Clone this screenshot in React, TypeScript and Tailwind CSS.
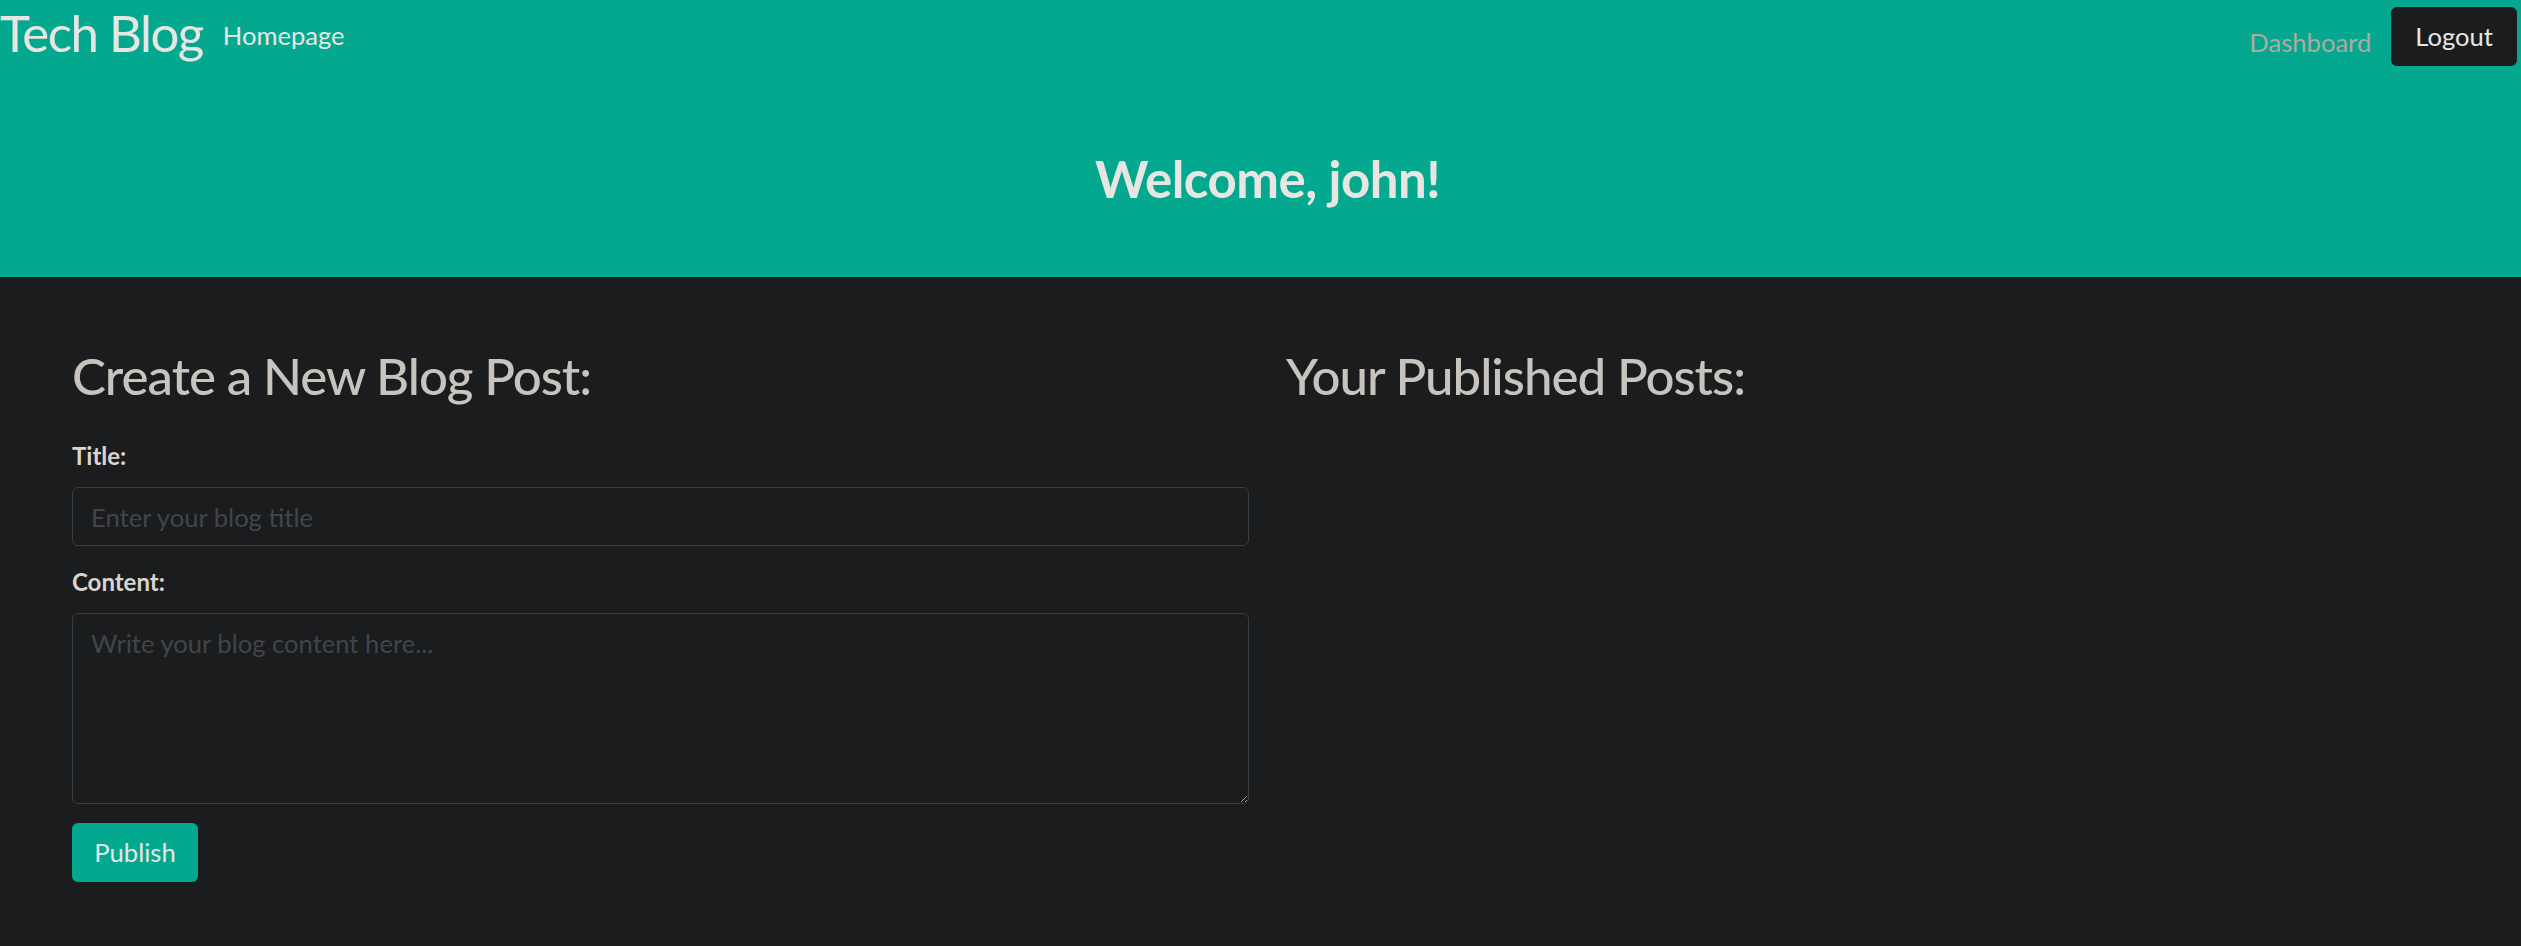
import React from "react";

function Navbar() {
    return (
        <nav className="flex items-start justify-between">
            <div className="flex items-center gap-[20px]">
                <a href="#" className="text-[51px] leading-[1.2] tracking-[-0.03em] text-[#e8e6e3] pt-[2px]">
                    Tech Blog
                </a>
                <a href="#" className="text-[25.6px] text-[#e8e6e3] pt-[8px]">
                    Homepage
                </a>
            </div>
            <div className="flex items-center gap-[20px] pt-[7px] pr-[4px]">
                <a href="#" className="text-[25.6px] text-[#b0aaa1] pt-[12px]">
                    Dashboard
                </a>
                <button className="h-[59px] px-[24px] rounded-[6px] bg-[#1b1c1e] text-[25.6px] text-[#e8e6e3]">
                    Logout
                </button>
            </div>
        </nav>
    );
}

function App() {
    return (
        <div className="min-h-[946px] bg-[#1b1c1e] font-['Lato',sans-serif]">
            <header className="h-[277px] bg-[#03a88f] flex flex-col">
                <Navbar />
                <h2 className="text-center text-[51px] font-bold tracking-[-0.01em] text-[#e8e6e3] mt-[75px] pl-[14px]">
                    Welcome, john!
                </h2>
            </header>

            <main className="grid grid-cols-2 gap-[37px] pl-[72px] pr-[58px] pt-[68px]">
                <section>
                    <h2 className="text-[51px] font-medium leading-[1.2] tracking-[-0.02em] text-[#c8c3bc] mb-[32px]">
                        Create a New Blog Post:
                    </h2>
                    <form className="flex flex-col">
                        <label className="text-[24px] font-bold text-[#d8d4cf] mb-[13px]">Title:</label>
                        <input
                            type="text"
                            placeholder="Enter your blog title"
                            className="h-[59px] px-[18px] rounded-[6px] border border-[#3a3d3f] bg-[#1b1c1e] text-[25.6px] text-[#e8e6e3] placeholder:text-[#40454a] outline-none"
                        />
                        <label className="text-[24px] font-bold text-[#d8d4cf] mt-[18px] mb-[13px]">Content:</label>
                        <textarea
                            placeholder="Write your blog content here..."
                            className="h-[191px] px-[18px] py-[10px] rounded-[6px] border border-[#3a3d3f] bg-[#1b1c1e] text-[25.6px] text-[#e8e6e3] placeholder:text-[#40454a] outline-none"
                        />
                        <div className="mt-[19px]">
                            <button
                                type="button"
                                className="h-[59px] w-[126px] rounded-[6px] bg-[#03a88f] text-[25.6px] text-[#e8e6e3]"
                            >
                                Publish
                            </button>
                        </div>
                    </form>
                </section>
                <section>
                    <h2 className="text-[51px] font-medium leading-[1.2] tracking-[-0.02em] text-[#c8c3bc]">
                        Your Published Posts:
                    </h2>
                </section>
            </main>
        </div>
    );
}

export default App;
